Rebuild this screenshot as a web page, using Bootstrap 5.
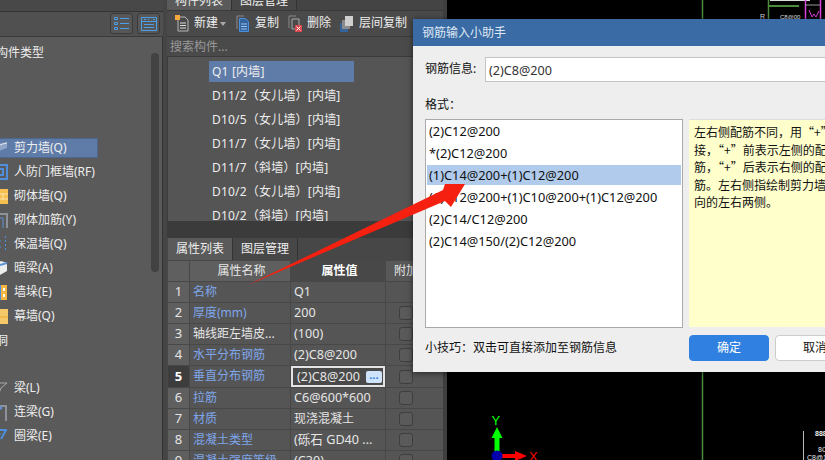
<!DOCTYPE html>
<html lang="zh-CN">

<head>
    <meta charset="UTF-8" />
    <meta name="viewport" content="width=device-width, initial-scale=1.0" />
    <title>钢筋输入小助手</title>
    <link href="https://cdn.jsdelivr.net/npm/bootstrap@5.3.0/dist/css/bootstrap.min.css" rel="stylesheet" crossorigin="anonymous" />
    <style>
        body { width: 825px; height: 460px; overflow: hidden; background: #000; font: 12px/1.2 "Noto Sans", "Noto Sans CJK SC", sans-serif; color: #eee; }
        .app { width: 825px; height: 460px; }

        /* left tree */
        .side { width: 167px; background: #5a5a5a; border-right: 4px solid #454545; box-shadow: inset -1px 0 0 #333; }
        .side-top { height: 37px; padding-top: 13px; background: linear-gradient(#484848 0 11px, #333 11px 12px, #505050 12px); border-bottom: 1px solid #3a3a3a; padding-right: 3px; }
        .view-btn { width: 23px; height: 21px; border: 1px solid #3a3a3a; border-radius: 3px; background: #575757; }
        .side-body { padding-top: 5px; }
        .side-scroll { top: 53px; left: 151px; width: 8px; height: 219px; background: #424242; border-radius: 4px; }
        .tree-row { height: 20px; margin-bottom: 4px; margin-left: -10px; width: 108px; white-space: nowrap; }
        .tree-row svg { flex: none; width: 18px; height: 18px; margin-right: 6px; }
        .tree-row.active-row { background: #5f7ca8; border: 1px solid #4c6790; }
        .tree-row.active-row svg { margin-left: -1px; }
        .tree-head { margin-left: -4px; height: 20px; margin-bottom: 4px; line-height: 21px; }
        .tree-gap { height: 72px; }
        .tree-gap-sm { height: 24px; }

        /* middle column */
        .mid { width: 276px; background: #555; overflow: hidden; }
        .mid > * { flex: none; }
        .top-tabs { height: 10px; overflow: hidden; background: #444; }
        .tab-item { width: 65px; text-align: center; background: #474747; border-right: 1px solid #333; }
        .tab-item.on { background: #5a5a5a; }
        .top-tabs .tab-item { height: 10px; line-height: 2px; }
        .tool-bar { height: 27px; background: #4a4a4a; border-top: 1px solid #3a3a3a; border-bottom: 1px solid #3a3a3a; padding-left: 8px; }
        .tool-bar svg { width: 14px; height: 17px; flex: none; }
        .tool-btn { margin-right: 9px; gap: 5px; }
        .caret-mark { width: 0; height: 0; border: 3px solid transparent; border-top: 4px solid #aaa; border-bottom: 0; margin-left: -7px; margin-right: 10px; }
        .search-row { height: 20px; background: #4a4a4a; border-bottom: 1px solid #3a3a3a; color: #989898; padding-left: 3px; line-height: 19px; }
        .comp-list { height: 164px; overflow: hidden; padding: 4px 0 0 41px; border-left: 1px solid #3c3c3c; }
        .comp-row { width: 145px; height: 21px; line-height: 21px; margin-bottom: 3px; padding-left: 3px; white-space: nowrap; letter-spacing: .2px; }
        .comp-row.on { background: #5f7ca8; }
        .dark-band { height: 17px; background: #3b3b3b; }
        .low-tabs { height: 22px; background: #474747; padding-left: 1px; }
        .low-tabs .tab-item { line-height: 22px; font-size: 12px; }
        .attr-table { width: 276px; table-layout: fixed; border-collapse: collapse; margin: 0; --bs-table-bg: transparent; --bs-table-color: #eee; color: #eee; }
        .attr-table th, .attr-table td { height: 21px; padding: 0 0 0 3px; border: 1px solid #484848; font-size: 12px; font-weight: 400; vertical-align: middle; white-space: nowrap; overflow: hidden; background: #555; color: #e6e6e6; }
        .attr-table th { text-align: center; background: #5f5f5f; }
        .attr-table th.val-head { background: #484848; font-weight: 700; color: #fff; }
        .attr-table th.add-head { background: #585858; text-align: left; padding-left: 8px; }
        .attr-table .idx { text-align: center; padding: 0; background: #5f5f5f; font-size: 13px; }
        .attr-table .idx.cur { background: #3d3d3d; color: #fff; font-weight: 700; }
        .attr-table .pname { color: #7fa6ea; }
        .attr-table .val-cell { font-size: 12.6px; }
        .attr-table .box-cell { padding-left: 13px; }
        .attr-table td.edit-cell { padding: 0; background: #4a4a4a; font-size: 12.6px; }
        .edit-box { height: 21px; border: 2px solid #e4e4e4; padding-left: 4px; gap: 6px; }
        .more-btn { width: 16px; height: 12px; border-radius: 2px; background: #cfe4fb; color: #2f80e0; line-height: 7px; text-align: center; font-weight: 700; font-size: 11px; letter-spacing: 0; }
        .chk { display: block; width: 14px; height: 14px; border: 1px solid #3e3e3e; border-radius: 3px; background: #5a5a5a; }
        .gutter { width: 4px; background: #3f3f3f; }

        /* cad view */
        .cad-view { background: #000; }
        .cad-view svg { top: 0; left: 0; }

        /* dialog */
        .helper-dlg { left: 413px; top: 19px; width: 440px; height: 353px; background: #eee; box-shadow: 0 1px 6px rgba(0, 0, 0, .55); color: #111; }
        .dlg-title { height: 27px; background: #3a6ba5; color: #dfe8f3; line-height: 27px; padding-left: 9px; }
        .dlg-body { padding: 11px 0 0 12px; }
        .info-label { width: 60px; }
        .info-input.form-control { width: 360px; height: 25px; padding: 1px 3px 0; border: 1px solid #c4c4c4; border-radius: 0; font-size: 12.6px; color: #333; box-shadow: none; }
        .fmt-label { margin: 15px 0 7px; height: 15px; line-height: 15px; }
        .fmt-list { width: 258px; height: 209px; padding: 0 1px; background: #fff; border: 1px solid #aaa; border-radius: 0; }
        .fmt-list .list-group-item { height: 22px; padding: 0 0 0 2px; line-height: 22px; border: 0; border-radius: 0; background: none; font-size: 12.8px; color: #111; white-space: nowrap; }
        .fmt-list .list-group-item.sel { height: 20px; margin: 1px 0; line-height: 20px; background: #b0cbeb; }
        .tip-box { width: 140px; height: 208px; margin-left: 6px; padding: 3px 0 0 5px; background: #ffc; border-top: 1px solid #ddd; white-space: nowrap; overflow: hidden; line-height: 17.5px; font-family: "Noto Sans CJK SC", sans-serif; }
        .foot-row { margin-top: 7px; }
        .foot-tip { flex: none; width: 264px; height: 26px; line-height: 26px; }
        .btn.dlg-btn { flex: none; width: 80px; height: 26px; padding: 0; border-radius: 4px; font-size: 12px; line-height: 24px; }
        .btn-primary.dlg-btn { --bs-btn-bg: #2f80e0; --bs-btn-border-color: #2f80e0; }
        .btn-light.dlg-btn { --bs-btn-bg: #fff; --bs-btn-border-color: #ccc; margin-left: 6px; color: #111; }

        .red-arrow { left: 0; top: 0; pointer-events: none; }
    </style>
</head>

<body>

    <div class="app d-flex">

        <!-- component types -->
        <div class="side position-relative flex-shrink-0">
            <div class="side-top d-flex justify-content-end gap-1">
                <div class="view-btn d-flex align-items-center justify-content-center">
                    <svg width="15" height="13" viewBox="0 0 15 13" fill="none" stroke="#4b9fe8"><path d="M.5.5h3v2h-3zM.5 5.5h3v2h-3zM.5 10.5h3v2h-3zM6 1.5h9M6 6.5h9M6 11.5h9" /></svg>
                </div>
                <div class="view-btn d-flex align-items-center justify-content-center">
                    <svg width="16" height="14" viewBox="0 0 16 14" fill="none" stroke="#4b9fe8"><path d="M.5.5h15v13H.5zM.5 4.5h15M3 7.5h10M3 10.5h10" /><path d="M3 2.5h2M7 2.5h1M12 2.5h2" /></svg>
                </div>
            </div>
            <div class="side-scroll position-absolute"></div>
            <div class="side-body">
                <div class="tree-head">构件类型</div>
                <div class="tree-gap"></div>
                <div class="tree-row active-row d-flex align-items-center"><svg viewBox="0 0 18 18"><path d="M0 12 C3 7 10 4 17 3 V9 C10 11 5 14 3 17 H0Z" fill="#8fa6c8" /><path d="M2 11 C6 7 11 5 17 4" stroke="#dfe6f0" fill="none" /></svg>剪力墙(Q)</div>
                <div class="tree-row d-flex align-items-center"><svg viewBox="0 0 18 18" fill="none" stroke="#4d8fdc" stroke-width="2"><path d="M1 2h16v14H1zM5 6h8v6H5z" /></svg>人防门框墙(RF)</div>
                <div class="tree-row d-flex align-items-center"><svg viewBox="0 0 18 18"><path d="M1 2h17v15H1z" fill="#f5c04f" /><path d="M1 7h17M1 12h17M9 2v5M5 7v5M13 7v5M9 12v5" stroke="#fbe6b0" /></svg>砌体墙(Q)</div>
                <div class="tree-row d-flex align-items-center"><svg viewBox="0 0 18 18" fill="none"><path d="M1 17V3h16v14" stroke="#8d9199" stroke-width="2" /><path d="M5 17V7h8v10M9 17v-6" stroke="#5a93d8" /></svg>砌体加筋(Y)</div>
                <div class="tree-row d-flex align-items-center"><svg viewBox="0 0 18 18" fill="none" stroke="#4d8fdc"><path d="M15.500 1v16M1 6h12M1 12h12" stroke-dasharray="2 2" /></svg>保温墙(Q)</div>
                <div class="tree-row d-flex align-items-center"><svg viewBox="0 0 18 18"><path d="M1 7 11 2l6 2v8l-9 5H1z" fill="#eee" /><path d="M10 6l7-2" stroke="#5a93d8" stroke-width="2" /></svg>暗梁(A)</div>
                <div class="tree-row d-flex align-items-center"><svg viewBox="0 0 18 18"><path d="M1 2h10v15H1z" fill="#4d8fdc" /><path d="M11 2h6v15h-6z" fill="#f5b63f" /><path d="M13 5h2v3h-2zM13 11h2v3h-2zM4 5h3v9H4z" fill="#fff" /></svg>墙垛(E)</div>
                <div class="tree-row d-flex align-items-center"><svg viewBox="0 0 18 18"><path d="M1 2h17v15H1z" fill="#f5c86a" /><path d="M1 10h17M9 10v7" stroke="#f0a92e" /></svg>幕墙(Q)</div>
                <div class="tree-head">洞</div>
                <div class="tree-gap-sm"></div>
                <div class="tree-row d-flex align-items-center"><svg viewBox="0 0 18 18" fill="none" stroke="#a8a8a8"><path d="M4 4h13L11 9 8 17 9 8z" /></svg>梁(L)</div>
                <div class="tree-row d-flex align-items-center"><svg viewBox="0 0 18 18" fill="none"><path d="M1 3h15v15" stroke="#8d9199" stroke-width="2" /><path d="M1 5h11" stroke="#5a93d8" stroke-width="3" /></svg>连梁(G)</div>
                <div class="tree-row d-flex align-items-center"><svg viewBox="0 0 18 18" fill="none" stroke="#4d8fdc" stroke-width="2"><path d="M17 3H7L2 16M16 3l-5 9M10 6l-4 8" /></svg>圈梁(E)</div>
            </div>
        </div>

        <!-- component list and properties -->
        <div class="mid flex-shrink-0 d-flex flex-column">
            <div class="top-tabs d-flex ps-0">
                <div class="tab-item on">构件列表</div>
                <div class="tab-item">图层管理</div>
            </div>
            <div class="tool-bar d-flex align-items-center">
                <div class="tool-btn d-flex align-items-center">
                    <svg viewBox="0 0 14 17" fill="none"><path d="M3 2h7l3 3v11H3z" stroke="#b8b8b8" /><path d="M5 8h6M5 10.500h6M5 13h6" stroke="#ddd" /><path d="M0 0h5v5H0z" fill="#f5a93c" /></svg>新建
                </div>
                <span class="caret-mark"></span>
                <div class="tool-btn d-flex align-items-center">
                    <svg viewBox="0 0 14 17" fill="none"><path d="M1 14V1h7" stroke="#8a8a8a" /><path d="M3.500 3.500h6l3 3v10h-9z" stroke="#4a8fe0" fill="#35639c" /><path d="M5 9h6M5 11.500h6M5 14h6" stroke="#9cc4f0" /></svg>复制
                </div>
                <div class="tool-btn d-flex align-items-center">
                    <svg viewBox="0 0 14 17" fill="none"><path d="M1 13V1h7" stroke="#8a8a8a" /><path d="M4 4h7v8M4 4v10h3" stroke="#aaa" /><path d="M7 10h7v7H7z" fill="#d9454a" /><path d="M8.500 11.500l4 4M12.500 11.500l-4 4" stroke="#fff" /></svg>删除
                </div>
                <div class="tool-btn d-flex align-items-center">
                    <svg viewBox="0 0 14 17"><path d="M0 8h8v9H0z" fill="#35639c" /><path d="M2 5h8v9H2z" fill="#8b8b8b" /><path d="M5 1h8v10H5z" fill="#cfcfcf" /></svg>层间复制
                </div>
            </div>
            <div class="search-row">搜索构件...</div>
            <div class="comp-list">
                <div class="comp-row on">Q1 [内墙]</div>
                <div class="comp-row">D11/2（女儿墙）[内墙]</div>
                <div class="comp-row">D10/5（女儿墙）[内墙]</div>
                <div class="comp-row">D11/7（女儿墙）[内墙]</div>
                <div class="comp-row">D11/7（斜墙）[内墙]</div>
                <div class="comp-row">D10/2（女儿墙）[内墙]</div>
                <div class="comp-row">D10/2（斜墙）[内墙]</div>
            </div>
            <div class="dark-band"></div>
            <div class="low-tabs d-flex">
                <div class="tab-item on">属性列表</div>
                <div class="tab-item">图层管理</div>
            </div>
            <table class="table attr-table">
                <colgroup>
                    <col style="width: 22px" /><col style="width: 101px" /><col style="width: 95px" /><col style="width: 58px" />
                </colgroup>
                <thead>
                    <tr><th class="idx"></th><th>属性名称</th><th class="val-head">属性值</th><th class="add-head">附加</th></tr>
                </thead>
                <tbody>
                    <tr><td class="idx">1</td><td class="pname">名称</td><td class="val-cell">Q1</td><td class="box-cell"></td></tr>
                    <tr><td class="idx">2</td><td class="pname">厚度(mm)</td><td class="val-cell">200</td><td class="box-cell"><span class="chk"></span></td></tr>
                    <tr><td class="idx">3</td><td>轴线距左墙皮...</td><td class="val-cell">(100)</td><td class="box-cell"><span class="chk"></span></td></tr>
                    <tr><td class="idx">4</td><td class="pname">水平分布钢筋</td><td class="val-cell">(2)C8@200</td><td class="box-cell"><span class="chk"></span></td></tr>
                    <tr><td class="idx cur">5</td><td class="pname">垂直分布钢筋</td><td class="edit-cell"><div class="edit-box d-flex align-items-center">(2)C8@200<span class="more-btn">...</span></div></td><td class="box-cell"><span class="chk"></span></td></tr>
                    <tr><td class="idx">6</td><td class="pname">拉筋</td><td class="val-cell">C6@600*600</td><td class="box-cell"><span class="chk"></span></td></tr>
                    <tr><td class="idx">7</td><td class="pname">材质</td><td>现浇混凝土</td><td class="box-cell"><span class="chk"></span></td></tr>
                    <tr><td class="idx">8</td><td class="pname">混凝土类型</td><td class="val-cell">(砾石 GD40 ...</td><td class="box-cell"><span class="chk"></span></td></tr>
                    <tr><td class="idx">9</td><td class="pname">混凝土强度等级</td><td class="val-cell">(C30)</td><td class="box-cell"><span class="chk"></span></td></tr>
                </tbody>
            </table>
        </div>
        <div class="gutter flex-shrink-0"></div>

        <!-- drawing area -->
        <div class="cad-view position-relative flex-grow-1">
            <svg class="position-absolute" width="378" height="460" viewBox="447 0 378 460" fill="none" font-family="Liberation Sans, sans-serif">
                <path d="M702.500 0v460M768.500 0v19" stroke="#4c8a3c" stroke-width="1.500" />
                <path d="M768 6h31" stroke="#4c8a3c" stroke-width="2" />
                <path d="M770 .5h40" stroke="#ddd" />
                <path d="M805.500 0v19M820.500 0v19" stroke="#e040e0" stroke-width="1.500" />
                <path d="M805 5h15" stroke="#999" />
                <path d="M809 10l3 7 2-3 2 3 3-6" stroke="#e040e0" />
                <text x="760" y="19" font-size="7" fill="#ddd">R</text>
                <text x="780" y="19" font-size="6" fill="#eee">C8@00</text>
                <path d="M803.500 431v29" stroke="#bbb" />
                <text x="815" y="436" font-size="7" fill="#eee" font-weight="700">888</text>
                <text x="818" y="452" font-size="7" fill="#eee">8C12</text>
                <text x="807" y="460" font-size="7" fill="#eee">C8@100</text>
                <path d="M497 456v-20" stroke="#0f0" stroke-width="5" />
                <path d="M497 427l-5.500 11h11z" fill="#0f0" />
                <path d="M497 456h20" stroke="#f00" stroke-width="4" />
                <path d="M515 451l12 5-12 5z" fill="#f00" />
                <circle cx="497" cy="456" r="5.500" fill="#00a" />
                <text x="491.500" y="425" font-size="13" fill="#0f0">Y</text>
                <text x="529" y="461" font-size="13" fill="#f00">X</text>
            </svg>
        </div>
    </div>

    <!-- rebar input helper -->
    <div class="helper-dlg position-absolute">
        <div class="dlg-title">钢筋输入小助手</div>
        <div class="dlg-body">
            <div class="d-flex align-items-center">
                <span class="info-label">钢筋信息:</span>
                <input class="form-control info-input" type="text" value="(2)C8@200" />
            </div>
            <div class="fmt-label">格式：</div>
            <div class="d-flex align-items-start">
                <div class="list-group fmt-list">
                    <div class="list-group-item">(2)C12@200</div>
                    <div class="list-group-item">*(2)C12@200</div>
                    <div class="list-group-item sel">(1)C14@200+(1)C12@200</div>
                    <div class="list-group-item">(1)C12@200+(1)C10@200+(1)C12@200</div>
                    <div class="list-group-item">(2)C14/C12@200</div>
                    <div class="list-group-item">(2)C14@150/(2)C12@200</div>
                </div>
                <div class="tip-box">
                    左右侧配筋不同，用“+”连<br />
                    接，“+”前表示左侧的配<br />
                    筋，“+”后表示右侧的配<br />
                    筋。左右侧指绘制剪力墙方<br />
                    向的左右两侧。
                </div>
            </div>
            <div class="foot-row d-flex">
                <div class="foot-tip">小技巧：双击可直接添加至钢筋信息</div>
                <button type="button" class="btn btn-primary dlg-btn">确定</button>
                <button type="button" class="btn btn-light dlg-btn">取消</button>
            </div>
        </div>
    </div>

    <!-- red annotation arrow -->
    <svg class="red-arrow position-absolute" width="825" height="460" viewBox="0 0 825 460">
        <path d="M248 285 443 190 445 184 465 184 451 207 445 201Z" fill="#f5200f" />
    </svg>

    <script src="https://cdn.jsdelivr.net/npm/bootstrap@5.3.0/dist/js/bootstrap.bundle.min.js"></script>
</body>

</html>
